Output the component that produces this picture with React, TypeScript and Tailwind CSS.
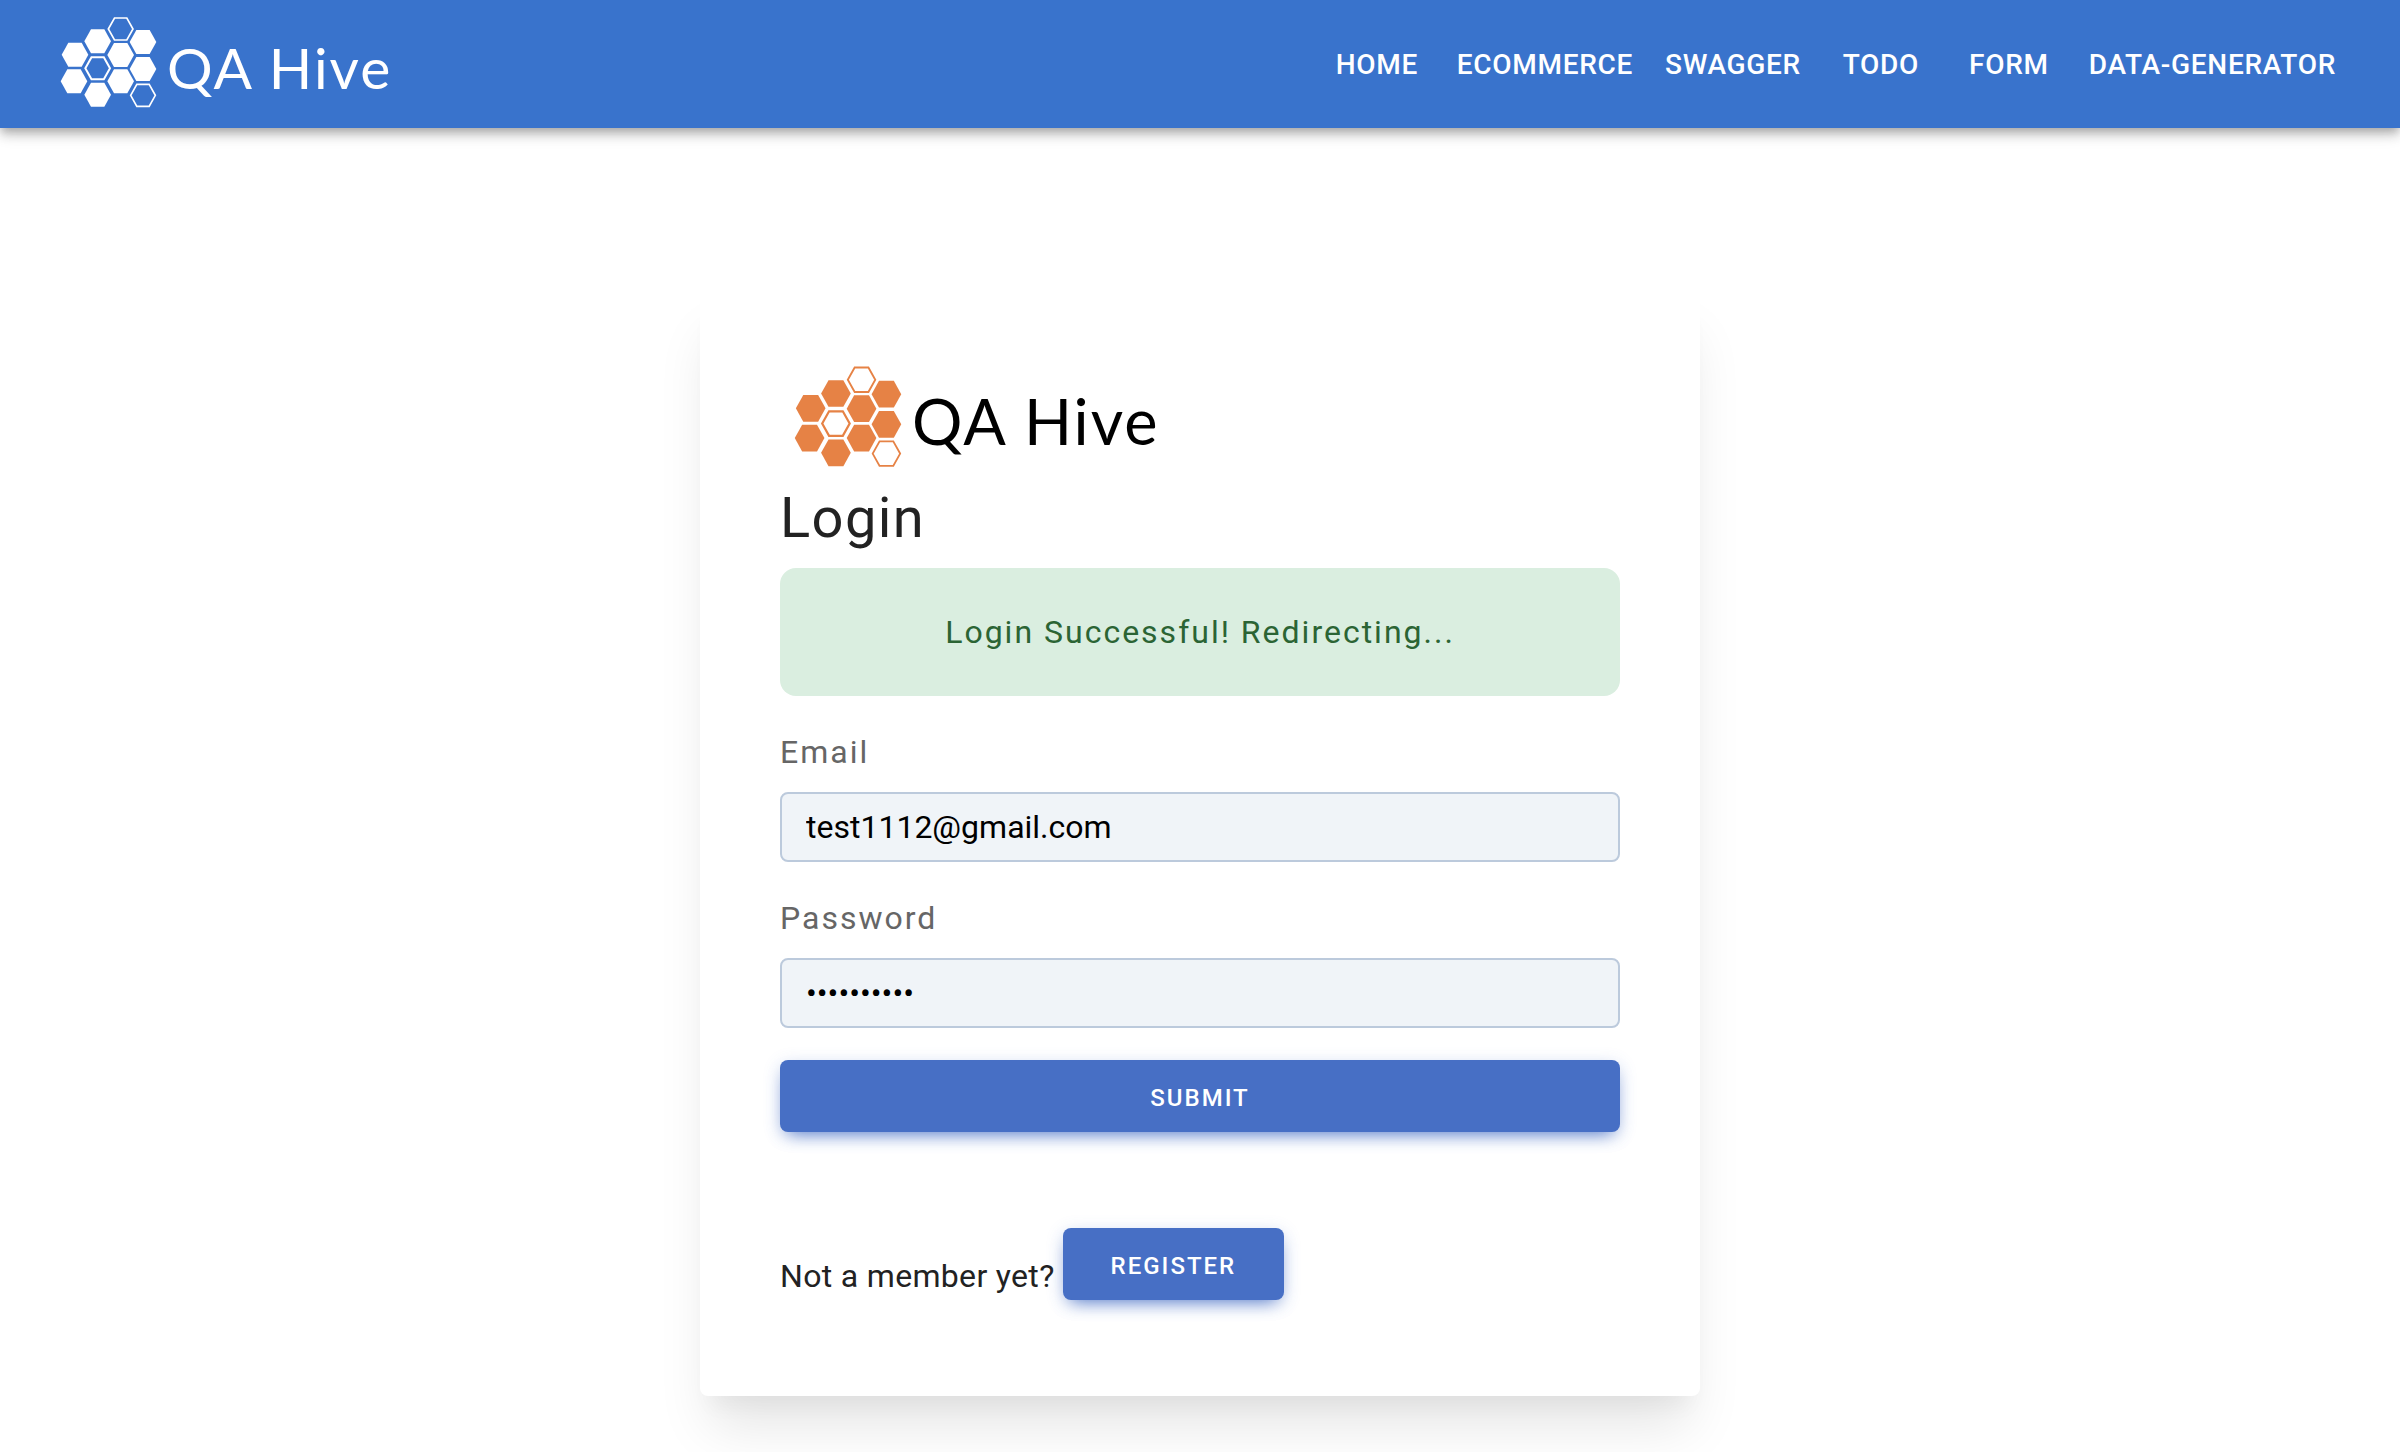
import { useState } from "react";
import clsx from "clsx";

type Cell = { x: number; y: number; open?: number };

const CELLS: Cell[] = [
  { x: 45, y: 116 },
  { x: 113, y: 76 },
  { x: 182, y: 39, open: 5 },
  { x: 249, y: 78 },
  { x: 113, y: 157, open: 6 },
  { x: 182, y: 117 },
  { x: 249, y: 159 },
  { x: 42, y: 196 },
  { x: 113, y: 236 },
  { x: 182, y: 196 },
  { x: 249, y: 238, open: 5 },
];

function hexagon(x: number, y: number, inset: number) {
  const w = 40 - inset;
  const h = 36 - inset;
  const s = 20 - inset / 2;
  return `${x - w},${y} ${x - s},${y - h} ${x + s},${y - h} ${x + w},${y} ${x + s},${y + h} ${x - s},${y + h}`;
}

function Honeycomb({ className }: { className: string }) {
  return (
    <svg viewBox="0 0 291 276" className={className} aria-hidden="true">
      {CELLS.map((c) =>
        c.open ? (
          <polygon
            key={`${c.x}-${c.y}`}
            points={hexagon(c.x, c.y, 3)}
            fill="none"
            stroke="currentColor"
            strokeWidth={c.open}
          />
        ) : (
          <polygon key={`${c.x}-${c.y}`} points={hexagon(c.x, c.y, 0)} fill="currentColor" />
        ),
      )}
    </svg>
  );
}

const NAV = ["Home", "Ecommerce", "Swagger", "Todo", "Form", "Data-Generator"];

function Header() {
  return (
    <header className="flex h-32 items-center justify-between bg-[#3973cc] pr-12 pl-15 text-white shadow-[0_4px_8px_-2px_rgba(0,0,0,0.2),0_8px_10px_0_rgba(0,0,0,0.14),0_2px_20px_0_rgba(0,0,0,0.12)]">
      <a href="#home" className="flex items-center gap-2.5 pb-1">
        <Honeycomb className="h-[92px] w-[97px]" />
        <span className="pt-2.5 font-['Lato',sans-serif] text-[57px] leading-16 tracking-[2px]">QA Hive</span>
      </a>
      <nav className="flex pt-0.5">
        {NAV.map((item) => (
          <a
            key={item}
            href={`#${item.toLowerCase()}`}
            className="min-w-32 px-4 text-center text-[28px] leading-12 font-medium tracking-wide uppercase"
          >
            {item}
          </a>
        ))}
      </nav>
    </header>
  );
}

type FieldProps = {
  id: string;
  label: string;
  type: string;
  value: string;
  onChange: (value: string) => void;
};

function Field({ id, label, type, value, onChange }: FieldProps) {
  return (
    <div className="mt-8">
      <label htmlFor={id} className="block text-[32px] leading-12 tracking-[2px] text-[#666]">
        {label}
      </label>
      <input
        id={id}
        type={type}
        value={value}
        onChange={(e) => onChange(e.target.value)}
        className="mt-4 block h-[70px] w-full rounded-lg border-2 border-[#bccadc] bg-[#f0f4f8] px-6 text-[32px] text-black outline-none"
      />
    </div>
  );
}

function Button({ type, className, children }: { type: "submit" | "button"; className: string; children: string }) {
  return (
    <button
      type={type}
      className={clsx(
        "h-[72px] rounded-lg bg-[#476fc5] pt-1 text-2xl font-medium tracking-[2px] text-white uppercase shadow-[0_8px_18px_-8px_#476fc5,0_4px_18px_0_rgba(71,111,197,0.2)]",
        className,
      )}
    >
      {children}
    </button>
  );
}

export default function App() {
  const [email, setEmail] = useState("test1112@gmail.com");
  const [password, setPassword] = useState("secret1112");

  return (
    <div className="min-h-screen bg-white font-['Roboto',sans-serif] text-[#222]">
      <Header />
      <main className="mx-auto mt-40 w-full max-w-[1000px] rounded-lg bg-white px-20 pt-16 pb-24 shadow-[0_40px_50px_-10px_rgba(0,0,0,0.1),0_20px_20px_-10px_rgba(0,0,0,0.04)]">
        <div className="flex h-32 items-center gap-2.5 pl-3.5">
          <Honeycomb className="h-[103px] w-[108px] text-[#e68245]" />
          <span className="pt-2.5 font-['Lato',sans-serif] text-[63px] leading-18 tracking-[2px] text-black">
            QA Hive
          </span>
        </div>
        <h1 className="mb-3.5 pt-0.5 text-[56px] leading-18 tracking-wide">Login</h1>
        <form onSubmit={(e) => e.preventDefault()}>
          <p
            role="status"
            className="rounded-2xl bg-[#daeee0] py-10 text-center text-[32px] leading-12 tracking-[2px] text-[#2b6434]"
          >
            Login Successful! Redirecting...
          </p>
          <Field id="email" label="Email" type="email" value={email} onChange={setEmail} />
          <Field id="password" label="Password" type="password" value={password} onChange={setPassword} />
          <Button type="submit" className="mt-8 w-full">
            Submit
          </Button>
        </form>
        <div className="mt-24 flex items-end gap-2">
          <p className="text-[32px] leading-12 tracking-[0.01em]">Not a member yet?</p>
          <Button type="button" className="px-12">
            Register
          </Button>
        </div>
      </main>
    </div>
  );
}
